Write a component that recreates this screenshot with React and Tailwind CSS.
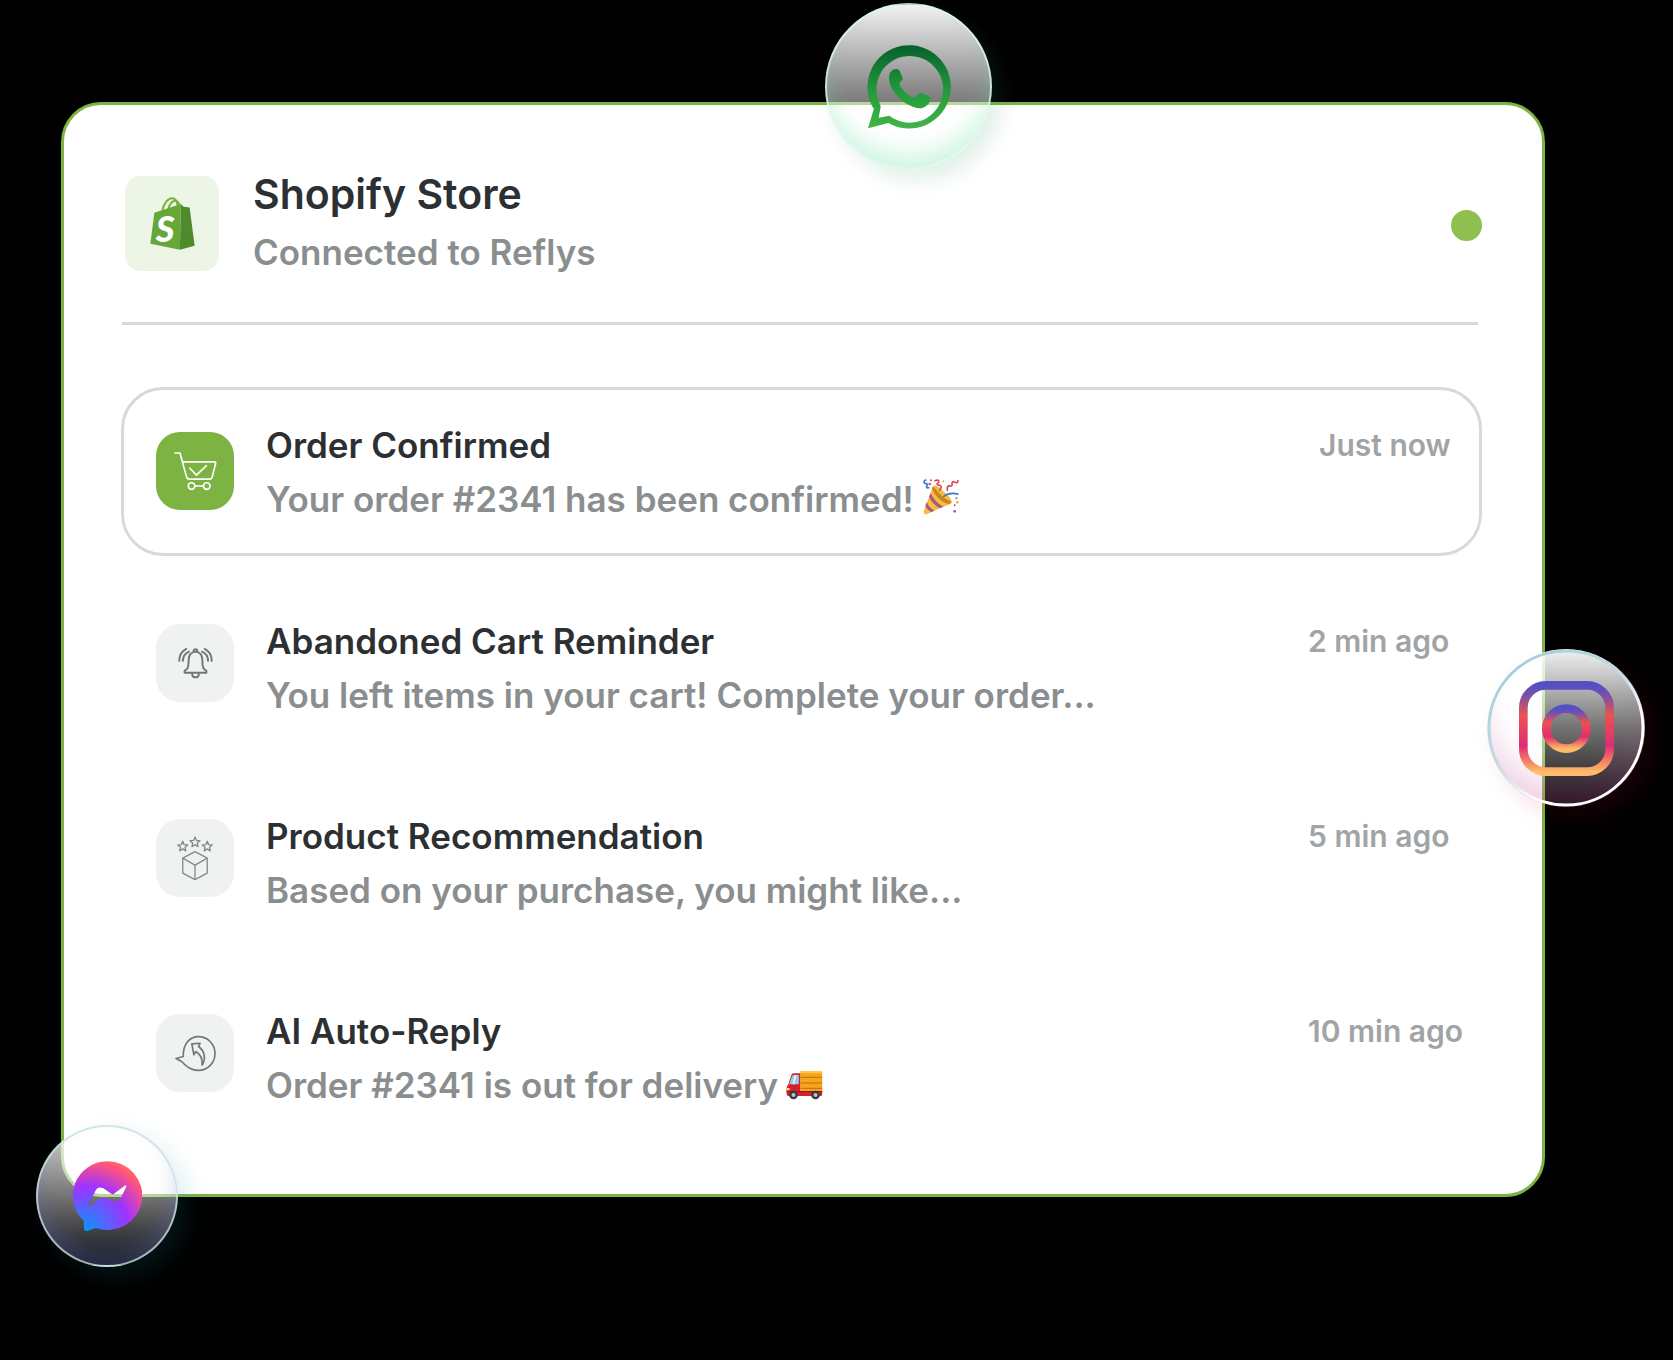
import clsx from 'clsx';

const notifications = [
  {
    id: 1,
    title: 'Order Confirmed',
    message: 'Your order #2341 has been confirmed!',
    time: 'Just now',
    icon: CartIcon,
    emoji: PartyPopper,
    active: true,
  },
  {
    id: 2,
    title: 'Abandoned Cart Reminder',
    message: 'You left items in your cart! Complete your order...',
    time: '2 min ago',
    icon: BellIcon,
  },
  {
    id: 3,
    title: 'Product Recommendation',
    message: 'Based on your purchase, you might like...',
    time: '5 min ago',
    icon: BoxIcon,
  },
  {
    id: 4,
    title: 'AI Auto-Reply',
    message: 'Order #2341 is out for delivery',
    time: '10 min ago',
    icon: ReplyIcon,
    emoji: Truck,
  },
];

function ShopifyLogo() {
  return (
    <svg viewBox="0 0 132 158" className="h-[53px] w-[45px]" role="img" aria-label="Shopify">
      <g fill="none" stroke="#7ab13f" strokeWidth="6">
        <path d="M35 44C39 18 54 3 66 4C77 5 81 18 82 32" />
        <path d="M53 38C56 20 68 9 77 12C84 14 87 22 88 30" />
      </g>
      <path d="M12 47L91 21L88 157L0 139Z" fill="#67a73a" />
      <path d="M91 21L99 29L117 31L132 145L88 157Z" fill="#4f8a2c" />
      <text x="16" y="133" fontSize="108" fontStyle="italic" fontWeight="900" fill="#fff" className="font-['Lato',sans-serif]">
        S
      </text>
    </svg>
  );
}

function CartIcon() {
  return (
    <svg viewBox="0 0 130 118" className="h-[39px] w-[43px]" fill="none" stroke="#fff" strokeWidth="5" strokeLinecap="round" strokeLinejoin="round" aria-hidden="true">
      <path d="M3 3H18L38 76Q40 82 47 82H108Q113 82 115 77L126 35Q127 30 121 30H26" />
      <path d="M48 49L68 70L98 41" />
      <circle cx="53" cy="103" r="10" />
      <circle cx="99" cy="103" r="10" />
      <path d="M63 103H89" />
    </svg>
  );
}

function BellIcon() {
  return (
    <svg viewBox="0 0 104 100" className="h-[33px] w-[35px]" fill="none" stroke="#737778" strokeWidth="6" strokeLinecap="round" strokeLinejoin="round" aria-hidden="true">
      <path d="M19 78Q17 71 26 67Q31 62 31 42Q31 16 52 14Q73 16 73 42Q73 62 78 67Q87 71 85 78Z" />
      <path d="M46 13Q47 7 52 7Q57 7 58 13" />
      <path d="M42 80Q42 92 52 92Q62 92 62 80" />
      <path d="M24 6Q2 18 3 42M32 14Q14 22 14 42M80 6Q102 18 101 42M72 14Q90 22 90 42" />
    </svg>
  );
}

const STAR = 'M0 -15L4 -5L15 -4L7 3L9 14L0 8L-9 14L-7 3L-15 -4L-4 -5Z';

function BoxIcon() {
  return (
    <svg viewBox="0 0 108 136" className="h-[45px] w-[36px]" fill="none" stroke="#85898a" strokeWidth="4" strokeLinejoin="round" aria-hidden="true">
      <path d={STAR} transform="translate(17 31)" />
      <path d={STAR} transform="translate(54 18)" />
      <path d={STAR} transform="translate(91 31)" />
      <path d="M54 47L91 67V112L54 132L17 112V67Z" />
      <path d="M17 67L54 88L91 67M54 88V132" />
    </svg>
  );
}

function ReplyIcon() {
  return (
    <svg viewBox="0 0 124 110" className="h-[37px] w-[41px]" fill="none" stroke="#737778" strokeWidth="5" strokeLinecap="round" strokeLinejoin="round" aria-hidden="true">
      <path d="M25 64L3 70L20 79C34 95 48 106 70 106C100 106 121 83 121 55C121 26 98 4 71 4C43 4 24 28 25 64Z" />
      <path d="M51 26L76 24L71 34C90 47 94 72 82 90C84 70 77 57 63 49L57 59Z" />
    </svg>
  );
}

function PartyPopper() {
  return (
    <svg viewBox="0 0 112 108" className="mb-1 h-[36px] w-[38px]" role="img" aria-label="Party popper">
      <path d="M33 20Q44 17 60 34Q86 56 89 68Q88 75 78 77L14 105Q3 108 4 97Z" fill="#f7bd3d" />
      <path d="M35 24Q25 23 32 36Q48 66 77 75Q89 75 84 66Q62 60 35 24Z" fill="#c98723" />
      <path d="M25 42Q37 70 63 83L52 88Q30 75 20 53ZM13 69Q21 88 37 95L27 99Q14 92 9 81Z" fill="#a8578c" />
      <g fill="none" strokeWidth="5" strokeLinecap="round">
        <path d="M10 3Q1 8 8 13Q18 13 13 21Q11 28 19 26" stroke="#3f76c9" />
        <path d="M38 5Q51 0 49 10Q38 17 52 19Q61 22 52 34" stroke="#d9435d" />
        <path d="M75 34Q73 20 82 20Q91 24 89 13Q90 5 98 10Q106 14 107 5" stroke="#d9435d" />
        <path d="M64 52Q81 39 107 45" stroke="#3f76c9" />
      </g>
      <g fill="#d9435d">
        <circle cx="26" cy="4" r="3" />
        <circle cx="97" cy="79" r="3" />
      </g>
      <g fill="#e4b13b">
        <circle cx="63" cy="7" r="3" />
        <circle cx="105" cy="70" r="4" />
      </g>
      <g fill="#8f62a8">
        <circle cx="22" cy="15" r="4" />
        <circle cx="97" cy="97" r="4" />
        <circle cx="102" cy="58" r="3" />
      </g>
    </svg>
  );
}

function Truck() {
  return (
    <svg viewBox="0 0 110 90" className="h-[30px] w-[37px]" role="img" aria-label="Delivery truck">
      <path d="M42 3H105Q108 3 108 7V66H42Z" fill="#f5a61c" />
      <path d="M42 3H105Q108 3 108 7V10H42Z" fill="#ffc64a" />
      <path d="M44 22H108M44 39H108M44 55H108" stroke="#b96f10" strokeWidth="3" />
      <path d="M16 14Q18 10 24 10H42V64H108V74Q108 78 103 78H6Q1 78 1 70V56Q1 48 6 44Z" fill="#d8202a" />
      <path d="M18 18Q19 15 24 15H38V43H9Z" fill="#8fd0ea" />
      <path d="M28 15L22 43" stroke="#e9f8ff" strokeWidth="5" />
      <path d="M2 65H108" stroke="#a30f18" strokeWidth="4" />
      <rect x="1" y="54" width="10" height="7" rx="3" fill="#ffe39a" />
      <circle cx="22" cy="75" r="13" fill="#353a40" />
      <circle cx="22" cy="75" r="6" fill="#b9c3cb" />
      <circle cx="88" cy="75" r="13" fill="#353a40" />
      <circle cx="88" cy="75" r="6" fill="#b9c3cb" />
    </svg>
  );
}

function WhatsAppBadge() {
  return (
    <a
      href="#whatsapp"
      aria-label="WhatsApp"
      className="absolute -top-[102px] left-1/2 ml-[22px] flex size-[167px] items-center justify-center rounded-full border-2 border-[#d9f5ee]/80 bg-linear-to-b from-white/95 via-white/55 via-50% to-white/20 shadow-[inset_0_-18px_24px_-6px_rgba(120,230,170,0.38),10px_10px_20px_rgba(40,150,90,0.14)]"
    >
      <svg viewBox="0 0 250 252" className="size-[84px]" aria-hidden="true">
        <defs>
          <linearGradient id="whatsapp" x1="0" y1="0" x2="0" y2="252" gradientUnits="userSpaceOnUse">
            <stop offset="0" stopColor="#05602c" />
            <stop offset="0.55" stopColor="#239a3a" />
            <stop offset="1" stopColor="#42b649" />
          </linearGradient>
        </defs>
        <g fill="url(#whatsapp)">
          <path
            fillRule="evenodd"
            d="M2 250L20 190L17 188A125 125 0 1 1 63 234ZM34 218L66 212A100 100 0 1 0 38 178L40 186Z"
          />
          <path d="M65 98C65 82 76 72 86 72C94 71 96 76 98 80L106 100C106 108 96 112 96 117C104 137 124 152 138 158C146 158 152 146 160 144C168 144 190 156 190 158C190 176 172 190 158 190C122 188 66 146 65 98Z" />
        </g>
      </svg>
    </a>
  );
}

function InstagramBadge() {
  return (
    <a
      href="#instagram"
      aria-label="Instagram"
      className="absolute top-[544px] -right-[103px] flex size-[158px] items-center justify-center rounded-full bg-linear-to-b from-white/95 via-white/45 via-50% to-white/5 shadow-[inset_0_-30px_30px_-6px_rgba(190,60,140,0.22),10px_10px_24px_rgba(200,20,50,0.12)]"
    >
      <svg viewBox="0 0 158 158" className="absolute inset-0" aria-hidden="true">
        <defs>
          <linearGradient id="instagram-ring" x1="0.2" y1="0.1" x2="0.8" y2="0.9">
            <stop offset="0" stopColor="#a5d0da" />
            <stop offset="0.45" stopColor="#c5dce4" />
            <stop offset="0.75" stopColor="#fff" />
          </linearGradient>
        </defs>
        <circle cx="79" cy="79" r="77" fill="none" stroke="url(#instagram-ring)" strokeWidth="3" />
      </svg>
      <svg viewBox="0 0 285 285" className="size-[95px]" fill="none" strokeWidth="26" aria-hidden="true">
        <defs>
          <linearGradient id="instagram" x1="0" y1="0" x2="0" y2="1">
            <stop offset="0" stopColor="#5350c4" />
            <stop offset="0.1" stopColor="#7350ad" />
            <stop offset="0.35" stopColor="#ec524f" />
            <stop offset="0.7" stopColor="#e12c72" />
            <stop offset="0.9" stopColor="#f58a62" />
            <stop offset="1" stopColor="#ffbb6b" />
          </linearGradient>
        </defs>
        <rect x="13" y="13" width="259" height="259" rx="68" stroke="url(#instagram)" />
        <circle cx="142" cy="143" r="60" stroke="url(#instagram)" />
      </svg>
    </a>
  );
}

function MessengerBadge() {
  return (
    <a
      href="#messenger"
      aria-label="Messenger"
      className="absolute -bottom-[73px] -left-[28px] flex size-[142px] items-center justify-center rounded-full border-2 border-[#c8dde2]/80 bg-linear-to-b from-white/85 via-white/50 via-45% to-white/5 shadow-[inset_0_-18px_22px_-4px_rgba(90,110,190,0.35),10px_10px_24px_rgba(30,140,160,0.14)]"
    >
      <svg viewBox="0 0 210 210" className="size-[70px]" aria-hidden="true">
        <defs>
          <radialGradient id="messenger" cx="0.19" cy="0.99" r="1.09">
            <stop offset="0" stopColor="#0a94ff" />
            <stop offset="0.58" stopColor="#a033ff" />
            <stop offset="0.9" stopColor="#ff5280" />
            <stop offset="1" stopColor="#ff7061" />
          </radialGradient>
        </defs>
        <path
          fill="url(#messenger)"
          fillRule="evenodd"
          d="M105 1A104 103 0 1 1 72 201L48 209Q36 212 36 201L35 179A104 103 0 0 1 105 1ZM52 136Q46 140 50 131L69 92Q77 74 94 82L119 99Q122 101 126 98L158 74Q165 71 162 79L146 112Q138 126 122 120L98 110Q93 108 88 111Z"
        />
      </svg>
    </a>
  );
}

function NotificationRow({ item }) {
  const Icon = item.icon;
  const Emoji = item.emoji;

  return (
    <li
      className={clsx(
        'flex min-h-[169px] items-start',
        item.active ? 'rounded-[42px] border-3 border-[#d9d9d9] pt-7 pl-8' : 'pt-8 pl-[35px]'
      )}
    >
      <div
        className={clsx(
          'flex size-[78px] shrink-0 items-center justify-center rounded-3xl',
          item.active ? 'mt-[14px] bg-[#7cb342]' : 'mt-[10px] bg-[#f0f2f1]'
        )}
      >
        <Icon />
      </div>
      <div className="ml-8 min-w-0 grow">
        <h3 className="text-[35px] leading-[54px] font-semibold text-[#2d3032]">{item.title}</h3>
        <p className="flex items-center gap-2 text-[35px] leading-[54px] font-semibold text-[#8b8e8f]">
          {item.message}
          {Emoji && <Emoji />}
        </p>
      </div>
      <time
        className={clsx(
          'shrink-0 text-[30px] leading-[54px] font-semibold whitespace-nowrap text-[#a1a4a5]',
          item.active ? 'w-[160px]' : 'w-[174px]'
        )}
      >
        {item.time}
      </time>
    </li>
  );
}

export default function App() {
  return (
    <div className="min-h-screen bg-black pt-[102px] pr-[128px] pb-[163px] pl-[61px] font-['Inter','Open_Sans',sans-serif]">
      <main className="relative rounded-[40px] border-3 border-[#7cb342] bg-white pt-[60px] pr-[60px] pb-[53px] pl-[57px]">
        <header className="flex items-center pl-1">
          <div className="flex h-[95px] w-[94px] shrink-0 items-center justify-center rounded-2xl bg-[#edf5e6]">
            <ShopifyLogo />
          </div>
          <div className="ml-[34px] grow">
            <h2 className="text-[41px] leading-[58px] font-semibold text-[#2d3032]">Shopify Store</h2>
            <p className="text-[35px] leading-[58px] font-semibold text-[#8b8e8f]">Connected to Reflys</p>
          </div>
          <span className="mt-1 size-[31px] rounded-full bg-[#8fbf4f]" role="img" aria-label="Online" />
        </header>

        <hr className="mt-[41px] mr-1 ml-px border-t-3 border-[#d9d9d9]" />

        <ul className="mt-[62px] flex flex-col gap-[26px]">
          {notifications.map((item) => (
            <NotificationRow key={item.id} item={item} />
          ))}
        </ul>

        <WhatsAppBadge />
        <InstagramBadge />
        <MessengerBadge />
      </main>
    </div>
  );
}
